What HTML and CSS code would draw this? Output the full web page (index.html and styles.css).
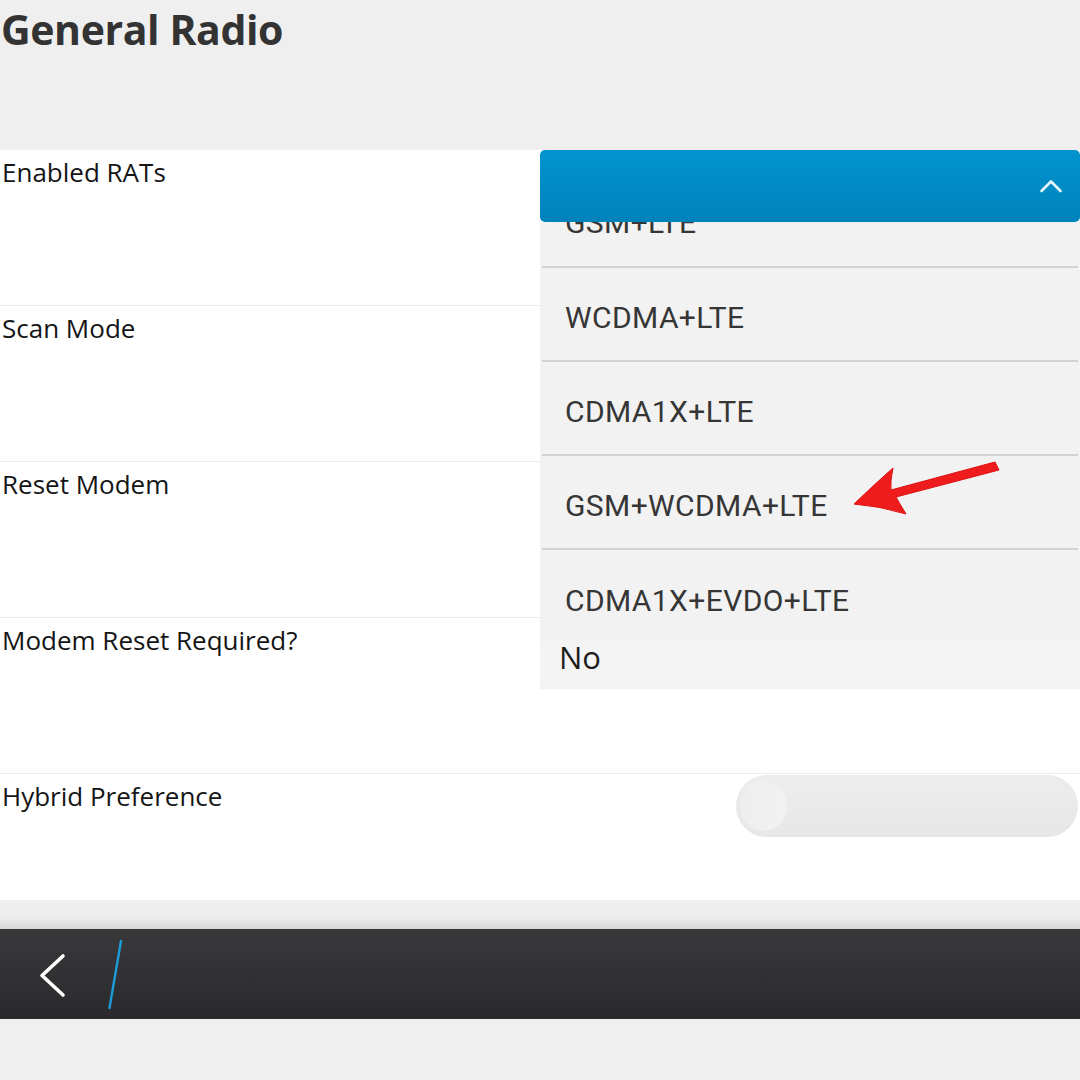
FILE: index.html
```html
<!DOCTYPE html>
<html lang="en">
<head>
    <meta charset="UTF-8">
    <meta name="viewport" content="width=device-width, initial-scale=1.0">
    <title>General Radio</title>
    <link rel="stylesheet" href="styles.css">
</head>
<body>
    <div class="screen">
        <h1 class="title">General Radio</h1>

        <div class="settings">
            <div class="row"><span class="label">Enabled RATs</span></div>
            <div class="row"><span class="label">Scan Mode</span></div>
            <div class="row"><span class="label">Reset Modem</span></div>
            <div class="row"><span class="label">Modem Reset Required?</span></div>
            <div class="row last">
                <span class="label">Hybrid Preference</span>
                <div class="toggle"><div class="knob"></div></div>
            </div>

            <!-- open drop down for Enabled RATs -->
            <div class="dropdown">
                <div class="dropdown-head">
                    <svg width="22" height="14" viewBox="0 0 22 14">
                        <polyline points="1.5,12 11,2.5 20.5,12" fill="none" stroke="#e6f6ff" stroke-width="2.6" stroke-linecap="round" stroke-linejoin="round"/>
                    </svg>
                </div>
                <div class="options">
                    <ul class="option-list">
                        <li class="peek">GSM+LTE</li>
                        <li>WCDMA+LTE</li>
                        <li>CDMA1X+LTE</li>
                        <li>GSM+WCDMA+LTE</li>
                        <li class="no-line">CDMA1X+EVDO+LTE</li>
                    </ul>
                    <div class="value">No</div>
                </div>
            </div>

            <svg class="pointer" width="160" height="66" viewBox="0 0 160 66">
                <path d="M4,49 Q26,28 43,13 Q40,26 41,35 L145,7 L149,15 L46,42 Q51,51 56,59 Q30,51 4,49 Z" fill="#ee1c1c" stroke="#e01010" stroke-width="1"/>
            </svg>
        </div>

        <div class="shade"></div>
        <div class="action-bar">
            <svg width="140" height="90" viewBox="0 0 140 90">
                <polyline points="63,27 42,46.5 63,66" fill="none" stroke="#ffffff" stroke-width="3.6" stroke-linecap="round" stroke-linejoin="round"/>
                <line x1="121" y1="12" x2="109.5" y2="79" stroke="#1d9bd8" stroke-width="2.4" stroke-linecap="round"/>
            </svg>
        </div>
    </div>
</body>
</html>
```

FILE: styles.css
```css
body {
    margin: 0;
    background-color: #efeff0;
    font-family: "Open Sans", "Noto Sans", sans-serif;
}

.screen {
    width: 1080px;
    height: 1080px;
    overflow: hidden;
    background-color: #efefef;
}

.title {
    margin: 0;
    height: 150px;
    padding-left: 1px;
    font-size: 41px;
    font-weight: 700;
    line-height: 58px;
    color: #333333;
    letter-spacing: -0.4px;
}

.settings {
    position: relative;
    background-color: #ffffff;
}

.row {
    height: 155px;
    border-bottom: 1px solid #eeeeee;
    display: flex;
    justify-content: space-between;
    align-items: flex-start;
}

.row.last {
    height: 126px;
    border-bottom: none;
}

.label {
    padding: 5px 0 0 2px;
    font-size: 26px;
    line-height: 34px;
    color: #151515;
}

.toggle {
    width: 342px;
    height: 62px;
    margin: 1px 2px 0 0;
    border-radius: 31px;
    background: linear-gradient(to bottom, #ededed, #e7e7e7);
    box-shadow: inset 0 0 2px rgba(0, 0, 0, 0.04);
    display: flex;
    align-items: center;
    padding-left: 4px;
    box-sizing: border-box;
}

.knob {
    width: 47px;
    height: 50px;
    border-radius: 50%;
    background: linear-gradient(to right, #eeeeee, #f2f2f2);
}

/* drop down list */
.dropdown {
    position: absolute;
    left: 540px;
    top: 0;
    width: 540px;
}

.dropdown-head {
    position: relative;
    z-index: 2;
    height: 72px;
    border-radius: 5px;
    background: linear-gradient(to bottom, #0294cf, #0082bb);
    display: flex;
    align-items: center;
    justify-content: flex-end;
    padding-right: 18px;
    box-sizing: border-box;
}

.options {
    height: 467px;
    overflow: hidden;
    background-color: #f2f2f2;
}

.option-list {
    list-style: none;
    margin: -48px 0 0 0;
    padding: 0;
}

.option-list li {
    height: 94px;
    border-bottom: 2px solid #d2d2d2;
    margin-left: 2px;
    margin-right: 2px;
    padding-left: 23px;
    display: flex;
    align-items: center;
    padding-top: 6px;
    box-sizing: border-box;
    font-family: Roboto, "Liberation Sans", sans-serif;
    font-size: 30px;
    color: #363636;
    letter-spacing: 0.4px;
}

.option-list li.peek {
    padding-top: 4px;
}

.option-list li.no-line {
    border-bottom: none;
}

.value {
    height: 45px;
    padding: 0 0 0 19px;
    margin-top: -2px;
    box-sizing: border-box;
    background-color: #f4f4f4;
    font-size: 31px;
    line-height: 30px;
    color: #1d1d1d;
}

.pointer {
    position: absolute;
    left: 850px;
    top: 305px;
}

/* bottom action bar */
.shade {
    height: 29px;
    background: linear-gradient(to bottom, #f0f0f0 0%, #ececec 60%, #d6d6d6 100%);
}

.action-bar {
    height: 90px;
    background: linear-gradient(to bottom, #39393b, #2a2a2c);
    display: flex;
    align-items: center;
}
```
